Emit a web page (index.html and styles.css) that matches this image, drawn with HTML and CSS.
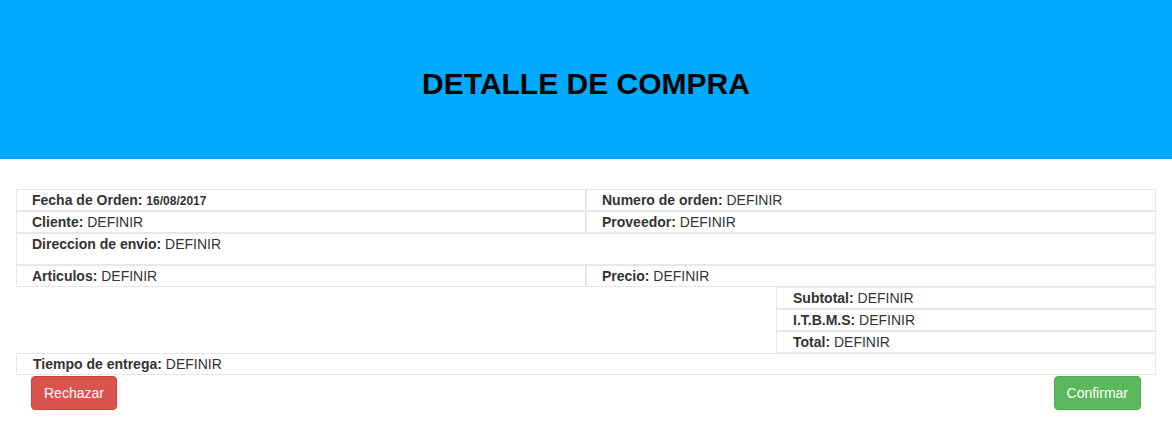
FILE: index.html
```html
<!DOCTYPE html>
<html lang="es">
<head>
<meta charset="utf-8">
<title>Detalle de compra</title>
<link rel="stylesheet" href="styles.css">
</head>
<body>
<header class="banner">
  <h1 class="banner-title">DETALLE DE COMPRA</h1>
</header>
<main class="detail">
  <div class="row">
    <div class="cell half"><b>Fecha de Orden:</b> <b class="date">16/08/2017</b></div>
    <div class="cell half"><b>Numero de orden:</b> DEFINIR</div>
  </div>
  <div class="row">
    <div class="cell half"><b>Cliente:</b> DEFINIR</div>
    <div class="cell half"><b>Proveedor:</b> DEFINIR</div>
  </div>
  <div class="row">
    <div class="cell full"><p class="address"><b>Direccion de envio:</b> DEFINIR</p></div>
  </div>
  <div class="row">
    <div class="cell half"><b>Articulos:</b> DEFINIR</div>
    <div class="cell half"><b>Precio:</b> DEFINIR</div>
  </div>
  <div class="summary">
    <div class="cell sum"><b>Subtotal:</b> DEFINIR</div>
    <div class="cell sum"><b>I.T.B.M.S:</b> DEFINIR</div>
    <div class="cell sum"><b>Total:</b> DEFINIR</div>
  </div>
  <div class="row">
    <div class="cell full wide-pad"><b>Tiempo de entrega:</b> DEFINIR</div>
  </div>
  <div class="actions">
    <button class="btn btn-danger" type="button">Rechazar</button>
    <button class="btn btn-success" type="button">Confirmar</button>
  </div>
</main>
</body>
</html>
```

FILE: styles.css
```css
* {
  box-sizing: border-box;
}

body {
  margin: 0;
  font-family: "Liberation Sans", Arial, sans-serif;
  font-size: 14px;
  line-height: 20px;
  color: #333;
  background: #fff;
}

.banner {
  height: 159px;
  background: #00aaff;
  display: flex;
  align-items: center;
  justify-content: center;
  padding-top: 8px;
}

.banner-title {
  margin: 0;
  font-size: 30px;
  line-height: 33px;
  font-weight: bold;
  color: #000;
}

.detail {
  margin: 30px 16px 0;
}

.row {
  display: flex;
}

.cell {
  border: 1px solid #e5e8eb;
  padding: 0 15px;
  height: auto;
  line-height: 20px;
}

.half {
  width: 50%;
}

.full {
  width: 100%;
}

.wide-pad {
  padding-left: 16px;
}

.address {
  margin: 0 0 10px;
}

.date {
  font-size: 12px;
  line-height: 1;
}

.summary {
  display: flex;
  flex-direction: column;
  align-items: flex-end;
}

.sum {
  width: 380px;
  padding-left: 16px;
}

.actions {
  display: flex;
  justify-content: space-between;
  padding: 1px 15px 0;
}

.btn {
  font-family: "Liberation Sans", Arial, sans-serif;
  font-size: 14px;
  line-height: 20px;
  padding: 6px 12px;
  border: 1px solid transparent;
  border-radius: 4px;
  color: #fff;
  cursor: pointer;
}

.btn-danger {
  background: #d9534f;
  border-color: #d43f3a;
}

.btn-success {
  background: #5cb85c;
  border-color: #4cae4c;
}
```
